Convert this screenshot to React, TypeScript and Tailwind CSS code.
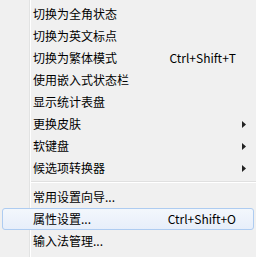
type Item = { label: string; shortcut?: string; submenu?: boolean; active?: boolean }

const top: Item[] = [
  { label: "切换为全角状态" },
  { label: "切换为英文标点" },
  { label: "切换为繁体模式", shortcut: "Ctrl+Shift+T" },
  { label: "使用嵌入式状态栏" },
  { label: "显示统计表盘" },
  { label: "更换皮肤", submenu: true },
  { label: "软键盘", submenu: true },
  { label: "候选项转换器", submenu: true },
]

const bottom: Item[] = [
  { label: "常用设置向导..." },
  { label: "属性设置...", shortcut: "Ctrl+Shift+O", active: true },
  { label: "输入法管理..." },
]

function MenuRow({ item }: { item: Item }) {
  return (
    <div
      className={
        item.active
          ? "mx-[2px] flex h-[22px] items-center rounded-[3px] border border-[#aeccf1] bg-[linear-gradient(#f3f7fc,#e7eefa)] pl-[30px]"
          : "mx-[2px] flex h-[22px] items-center border border-transparent pl-[30px]"
      }
    >
      <span className="text-[12px] leading-none text-[#000]">{item.label}</span>
      {item.shortcut && (
        <span className="ml-auto pr-[17px] text-[12px] leading-none text-[#000]">{item.shortcut}</span>
      )}
      {item.submenu && (
        <svg className="ml-auto mr-[7px]" width="4" height="7" viewBox="0 0 4 7">
          <path d="M0 0 L4 3.5 L0 7 Z" fill="#222" />
        </svg>
      )}
    </div>
  )
}

export default function App() {
  return (
    <div
      className="h-[257px] w-[256px] overflow-hidden bg-[#f0f0f0] bg-[linear-gradient(to_right,#f0f0f0_29px,#e2e3e3_29px,#e2e3e3_30px,#ffffff_30px,#ffffff_31px,#f0f0f0_31px)] pt-[3px]"
      style={{ fontFamily: '"Noto Sans CJK SC", "Liberation Sans", sans-serif' }}
    >
      {top.map((item) => (
        <MenuRow key={item.label} item={item} />
      ))}
      <div className="ml-[31px] pb-[3px] pt-[2px]">
        <div className="h-px bg-[#e0e0e0]" />
        <div className="h-px bg-white" />
      </div>
      {bottom.map((item) => (
        <MenuRow key={item.label} item={item} />
      ))}
    </div>
  )
}
